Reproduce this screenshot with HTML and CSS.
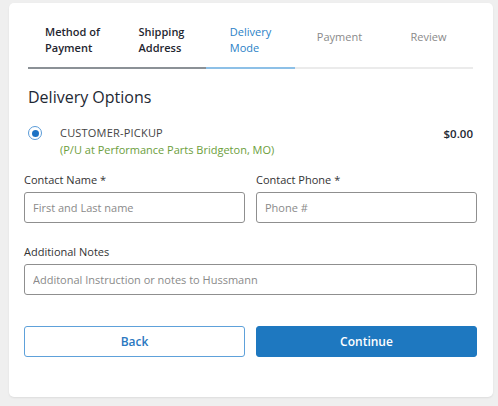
FILE: index.html
```html
<!DOCTYPE html>
<html lang="en">
<head>
    <meta charset="UTF-8">
    <meta name="viewport" content="width=device-width, initial-scale=1.0">
    <title>Checkout - Delivery Mode</title>
    <link rel="stylesheet" href="styles.css">
</head>
<body>
    <div class="checkout-card">
        <nav class="steps">
            <div class="step done"><span>Method of<br>Payment</span></div>
            <div class="step done"><span>Shipping<br>Address</span></div>
            <div class="step active"><span>Delivery<br>Mode</span></div>
            <div class="step"><span>Payment</span></div>
            <div class="step"><span>Review</span></div>
        </nav>

        <h2 class="section-title">Delivery Options</h2>

        <label class="option">
            <span class="radio"><span class="radio-dot"></span></span>
            <span class="option-text">
                <span class="option-name">CUSTOMER-PICKUP</span>
                <span class="option-note">(P/U at Performance Parts Bridgeton, MO)</span>
            </span>
            <span class="option-price">$0.00</span>
        </label>

        <div class="form-row">
            <div class="field">
                <label>Contact Name *</label>
                <input type="text" placeholder="First and Last name">
            </div>
            <div class="field">
                <label>Contact Phone *</label>
                <input type="text" placeholder="Phone #">
            </div>
        </div>

        <div class="field notes">
            <label>Additional Notes</label>
            <input type="text" placeholder="Additonal Instruction or notes to Hussmann">
        </div>

        <div class="actions">
            <button class="btn btn-back">Back</button>
            <button class="btn btn-continue">Continue</button>
        </div>
    </div>
</body>
</html>
```

FILE: styles.css
```css
/* Reset and base styles */
* {
    margin: 0;
    padding: 0;
    box-sizing: border-box;
}

body {
    font-family: "Open Sans", Arial, sans-serif;
    background-color: #efefef;
    padding: 3px 5px 9px 9px;
    color: #333;
}

.checkout-card {
    background-color: white;
    border-radius: 5px;
    box-shadow: 0 1px 2px rgba(0, 0, 0, 0.08);
    width: 484px;
    height: 394px;
    padding: 21px 16px 0 15px;
}

/* Steps */
.steps {
    display: grid;
    grid-template-columns: repeat(5, 1fr);
    margin: 0 4px;
}
.step {
    text-align: center;
    height: 45px;
    border-bottom: 2px solid #ebebeb;
}
.step span {
    display: inline-block;
    text-align: left;
    font-size: 11px;
    line-height: 16px;
    color: #8a8a8a;
}
.step.done {
    border-bottom-color: #8b9196;
}
.step.done span {
    color: #1f2630;
    font-weight: 600;
}
.step.active {
    border-bottom-color: #8dc0e7;
}
.step.active span {
    color: #2a7fc7;
}

.section-title {
    font-size: 16px;
    font-weight: 500;
    line-height: 20px;
    color: #1e2833;
    margin-top: 18px;
    margin-left: 4px;
}

/* Delivery option */
.option {
    display: flex;
    align-items: flex-start;
    margin: 17px 4px 0 4px;
    font-size: 11px;
    line-height: 17px;
}
.radio {
    width: 14px;
    height: 14px;
    margin-top: 2px;
    border: 1.5px solid #5a9bd8;
    border-radius: 50%;
    display: flex;
    align-items: center;
    justify-content: center;
}
.radio-dot {
    width: 7px;
    height: 7px;
    border-radius: 50%;
    background-color: #1d72c4;
}
.option-text {
    display: flex;
    flex-direction: column;
    margin-left: 18px;
    flex: 1;
}
.option-name {
    color: #444;
    letter-spacing: 0.2px;
}
.option-note {
    color: #6c9e3c;
}
.option-price {
    font-size: 11.5px;
    font-weight: 600;
    color: #1e2833;
    margin-top: 1px;
}

/* Form fields */
.form-row {
    display: flex;
    gap: 11px;
    margin-top: 14px;
}
.field {
    flex: 1;
}
.field label {
    display: block;
    font-size: 11px;
    line-height: 16px;
    color: #333;
    margin-bottom: 4px;
}
.field input {
    width: 100%;
    height: 31px;
    border: 1px solid #8f8f8f;
    border-radius: 3px;
    padding: 0 8px;
    font-family: inherit;
    font-size: 11px;
    color: #333;
}
.field input::placeholder {
    color: #8a8a8a;
}
.notes {
    margin-top: 21px;
}

/* Buttons */
.actions {
    display: flex;
    gap: 11px;
    margin-top: 31px;
}
.btn {
    flex: 1;
    height: 31px;
    border-radius: 3px;
    font-family: inherit;
    font-size: 12px;
    font-weight: 600;
    cursor: pointer;
}
.btn-back {
    background-color: white;
    color: #2a78c0;
    border: 1px solid #5ea1da;
}
.btn-continue {
    background-color: #1e78c0;
    color: white;
    border: 1px solid #1e78c0;
}
```
